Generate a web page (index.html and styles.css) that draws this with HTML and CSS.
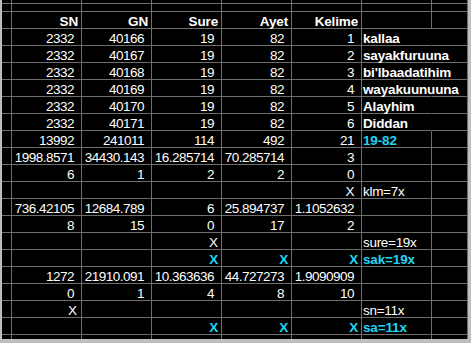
FILE: index.html
```html
<!DOCTYPE html>
<html>
<head>
<meta charset="utf-8">
<link rel="stylesheet" href="styles.css">
</head>
<body>
<div class="frame">
  <div class="sheet">
    <!-- partial top rows -->
    <div class="c h4"></div><div class="c h4"></div><div class="c h4"></div><div class="c h4"></div><div class="c h4"></div><div class="c h4"></div><div class="c h4"></div><div class="c h4"></div>
    <div class="c"></div><div class="c"></div><div class="c"></div><div class="c"></div><div class="c"></div><div class="c"></div><div class="c"></div><div class="c"></div>
    <!-- header -->
    <div class="c"></div><div class="c b r">SN</div><div class="c b r">GN</div><div class="c b r">Sure</div><div class="c b r">Ayet</div><div class="c b r">Kelime</div><div class="c"></div><div class="c"></div>
    <!-- words -->
    <div class="c"></div><div class="c n">2332</div><div class="c n">40166</div><div class="c n">19</div><div class="c n">82</div><div class="c n">1</div><div class="c b l nb">kallaa</div><div class="c"></div>
    <div class="c"></div><div class="c n">2332</div><div class="c n">40167</div><div class="c n">19</div><div class="c n">82</div><div class="c n">2</div><div class="c b l nb">sayakfuruuna</div><div class="c"></div>
    <div class="c"></div><div class="c n">2332</div><div class="c n">40168</div><div class="c n">19</div><div class="c n">82</div><div class="c n">3</div><div class="c b l nb">bi'lbaadatihim</div><div class="c"></div>
    <div class="c"></div><div class="c n">2332</div><div class="c n">40169</div><div class="c n">19</div><div class="c n">82</div><div class="c n">4</div><div class="c b l nb">wayakuunuuna</div><div class="c"></div>
    <div class="c"></div><div class="c n">2332</div><div class="c n">40170</div><div class="c n">19</div><div class="c n">82</div><div class="c n">5</div><div class="c b l nb">Alayhim</div><div class="c"></div>
    <div class="c"></div><div class="c n">2332</div><div class="c n">40171</div><div class="c n">19</div><div class="c n">82</div><div class="c n">6</div><div class="c b l nb">Diddan</div><div class="c"></div>
    <!-- totals -->
    <div class="c"></div><div class="c n">13992</div><div class="c n">241011</div><div class="c n">114</div><div class="c n">492</div><div class="c n">21</div><div class="c b l cy">19-82</div><div class="c"></div>
    <div class="c"></div><div class="c n">1998.8571</div><div class="c n">34430.143</div><div class="c n">16.285714</div><div class="c n">70.285714</div><div class="c n">3</div><div class="c"></div><div class="c"></div>
    <div class="c"></div><div class="c n">6</div><div class="c n">1</div><div class="c n">2</div><div class="c n">2</div><div class="c n">0</div><div class="c"></div><div class="c"></div>
    <div class="c"></div><div class="c"></div><div class="c"></div><div class="c"></div><div class="c"></div><div class="c n">X</div><div class="c l">klm=7x</div><div class="c"></div>
    <div class="c"></div><div class="c n">736.42105</div><div class="c n">12684.789</div><div class="c n">6</div><div class="c n">25.894737</div><div class="c n">1.1052632</div><div class="c"></div><div class="c"></div>
    <div class="c"></div><div class="c n">8</div><div class="c n">15</div><div class="c n">0</div><div class="c n">17</div><div class="c n">2</div><div class="c"></div><div class="c"></div>
    <div class="c"></div><div class="c"></div><div class="c"></div><div class="c r">X</div><div class="c"></div><div class="c"></div><div class="c l">sure=19x</div><div class="c"></div>
    <div class="c"></div><div class="c"></div><div class="c"></div><div class="c b r cy">X</div><div class="c b r cy">X</div><div class="c b r cy">X</div><div class="c b l cy">sak=19x</div><div class="c"></div>
    <div class="c"></div><div class="c n">1272</div><div class="c n">21910.091</div><div class="c n">10.363636</div><div class="c n">44.727273</div><div class="c n">1.9090909</div><div class="c"></div><div class="c"></div>
    <div class="c"></div><div class="c n">0</div><div class="c n">1</div><div class="c n">4</div><div class="c n">8</div><div class="c n">10</div><div class="c"></div><div class="c"></div>
    <div class="c"></div><div class="c r x4">X</div><div class="c"></div><div class="c"></div><div class="c"></div><div class="c"></div><div class="c l">sn=11x</div><div class="c"></div>
    <div class="c"></div><div class="c"></div><div class="c"></div><div class="c b r cy">X</div><div class="c b r cy">X</div><div class="c b r cy">X</div><div class="c b l cy">sa=11x</div><div class="c"></div>
    <!-- partial bottom row -->
    <div class="c"></div><div class="c"></div><div class="c"></div><div class="c"></div><div class="c"></div><div class="c"></div><div class="c"></div><div class="c"></div>
  </div>
</div>
</body>
</html>
```
FILE: styles.css
```css
html, body {
  margin: 0;
  padding: 0;
  background: #bdbdbd;
}

.frame {
  width: 471px;
  height: 343px;
  background: #bdbdbd;
  overflow: hidden;
}

.sheet {
  margin-left: 2px;
  width: 466px;
  height: 339px;
  overflow: hidden;
  background: #000;
  display: grid;
  grid-template-columns: 10px repeat(6, 70px) 1fr;
  grid-template-rows: 4px 8px;
  grid-auto-rows: 17px;
  font-family: "Liberation Sans", Arial, sans-serif;
  font-size: 13.5px;
  color: #fff;
}

.c {
  box-sizing: border-box;
  border-right: 1px solid #6e6e6e;
  border-bottom: 1px solid #6e6e6e;
  white-space: nowrap;
  line-height: 20.6px;
  min-width: 0;
  overflow: visible;
}

.n {
  text-align: right;
  padding-right: 7px;
  letter-spacing: -0.5px;
}

.r {
  text-align: right;
  padding-right: 3px;
}

.x4 {
  padding-right: 4px;
}

.l {
  text-align: left;
  padding-left: 1px;
  letter-spacing: -0.3px;
}

.b {
  font-weight: bold;
  letter-spacing: -0.15px;
}

.cy {
  color: #22d3f5;
}

.nb {
  border-right-color: transparent;
}
```
